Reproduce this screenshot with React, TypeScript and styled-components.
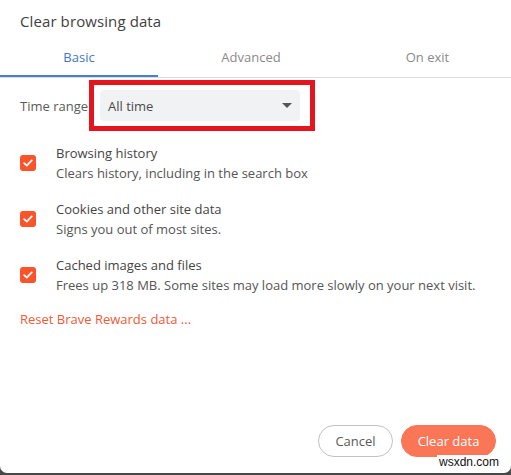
import React from "react";
import styled, { createGlobalStyle } from "styled-components";

const GlobalStyle = createGlobalStyle`
  html, body { margin: 0; padding: 0; background: #474747; }
  body { font-family: "Open Sans", "Lato", sans-serif; }
  * { box-sizing: border-box; }
`;

const Dialog = styled.div`
  position: relative;
  width: 511px;
  height: 473px;
  background: #ffffff;
  border-radius: 0 0 7px 7px;
  display: flex;
  flex-direction: column;
  color: #3d3d3d;
`;

const Header = styled.div`
  height: 42px;
  padding-left: 20px;
  display: flex;
  align-items: center;
  font-size: 15px;
  color: #3f3f3f;
  letter-spacing: 0.1px;
`;

const Tabs = styled.div`
  display: grid;
  grid-template-columns: 158px 186px 1fr;
  border-bottom: 1px solid #dddddd;
`;

const Tab = styled.div<{ $active?: boolean }>`
  height: 35px;
  padding-bottom: 5px;
  display: flex;
  align-items: center;
  justify-content: center;
  font-size: 13px;
  color: ${(p) => (p.$active ? "#4177c7" : "#8a8a8a")};
  box-shadow: ${(p) => (p.$active ? "inset 0 -2px 0 #4a7fcb" : "none")};
`;

const RangeRow = styled.div`
  padding: 12px 20px 0;
  display: flex;
  align-items: center;
`;

const RangeLabel = styled.div`
  width: 80px;
  font-size: 13px;
  color: #5a5a5a;
  white-space: nowrap;
`;

const Select = styled.div`
  width: 200px;
  height: 31px;
  border-radius: 4px;
  background: #f1f2f4;
  display: flex;
  align-items: center;
  justify-content: space-between;
  padding: 0 8px 0 8px;
  font-size: 13px;
  color: #4a4a4a;
`;

const Arrow = styled.span`
  width: 0;
  height: 0;
  border-left: 5px solid transparent;
  border-right: 5px solid transparent;
  border-top: 5px solid #555555;
`;

const Highlight = styled.div`
  position: absolute;
  left: 89px;
  top: 80px;
  width: 226px;
  height: 51px;
  border: 5px solid #e4151f;
`;

const Items = styled.div`
  margin-top: 22px;
  padding: 0 20px;
  display: flex;
  flex-direction: column;
  gap: 16px;
`;

const Item = styled.div`
  display: flex;
  align-items: center;
  gap: 20px;
`;

const Box = styled.span`
  width: 16px;
  height: 16px;
  border-radius: 3px;
  background: #fb542b;
  display: flex;
  align-items: center;
  justify-content: center;
  flex-shrink: 0;
`;

const ItemText = styled.div`
  display: flex;
  flex-direction: column;
  font-size: 13px;
  line-height: 20px;
`;

const ItemTitle = styled.div`
  color: #444444;
`;

const ItemSub = styled.div`
  color: #555555;
`;

const ResetLink = styled.div`
  margin-top: 14px;
  padding-left: 20px;
  font-size: 13px;
  line-height: 20px;
  color: #f05a37;
`;

const Footer = styled.div`
  margin-top: auto;
  padding: 0 15px 16px 0;
  display: flex;
  justify-content: flex-end;
  gap: 8px;
`;

const Button = styled.button<{ $primary?: boolean }>`
  height: 32px;
  border-radius: 16px;
  font-family: "Open Sans", "Lato", sans-serif;
  font-size: 13px;
  padding: 0;
  width: ${(p) => (p.$primary ? "95px" : "75px")};
  border: 1px solid ${(p) => (p.$primary ? "#fa7656" : "#c2c2c2")};
  background: ${(p) => (p.$primary ? "#fa7656" : "#ffffff")};
  color: ${(p) => (p.$primary ? "#ffffff" : "#5a5a5a")};
`;

const Watermark = styled.div`
  position: absolute;
  left: 437px;
  top: 455px;
  font-family: "Liberation Sans", Arial, sans-serif;
  font-size: 12px;
  color: #111111;
  background: #ffffff;
  padding: 0 2px;
`;

const Check = () => (
  <svg width="10" height="8" viewBox="0 0 10 8">
    <path d="M1.2 4.2 L3.8 6.6 L8.8 1.4" fill="none" stroke="#fff" strokeWidth="1.8" strokeLinecap="round" strokeLinejoin="round" />
  </svg>
);

const items = [
  { title: "Browsing history", sub: "Clears history, including in the search box" },
  { title: "Cookies and other site data", sub: "Signs you out of most sites." },
  { title: "Cached images and files", sub: "Frees up 318 MB. Some sites may load more slowly on your next visit." },
];

export default function App() {
  return (
    <>
      <GlobalStyle />
      <Dialog>
        <Header>Clear browsing data</Header>
        <Tabs>
          <Tab $active>Basic</Tab>
          <Tab>Advanced</Tab>
          <Tab>On exit</Tab>
        </Tabs>
        <RangeRow>
          <RangeLabel>Time range</RangeLabel>
          <Select>
            <span>All time</span>
            <Arrow />
          </Select>
        </RangeRow>
        <Highlight />
        <Items>
          {items.map((it) => (
            <Item key={it.title}>
              <Box>
                <Check />
              </Box>
              <ItemText>
                <ItemTitle>{it.title}</ItemTitle>
                <ItemSub>{it.sub}</ItemSub>
              </ItemText>
            </Item>
          ))}
        </Items>
        <ResetLink>Reset Brave Rewards data ...</ResetLink>
        <Footer>
          <Button>Cancel</Button>
          <Button $primary>Clear data</Button>
        </Footer>
        <Watermark>wsxdn.com</Watermark>
      </Dialog>
    </>
  );
}
